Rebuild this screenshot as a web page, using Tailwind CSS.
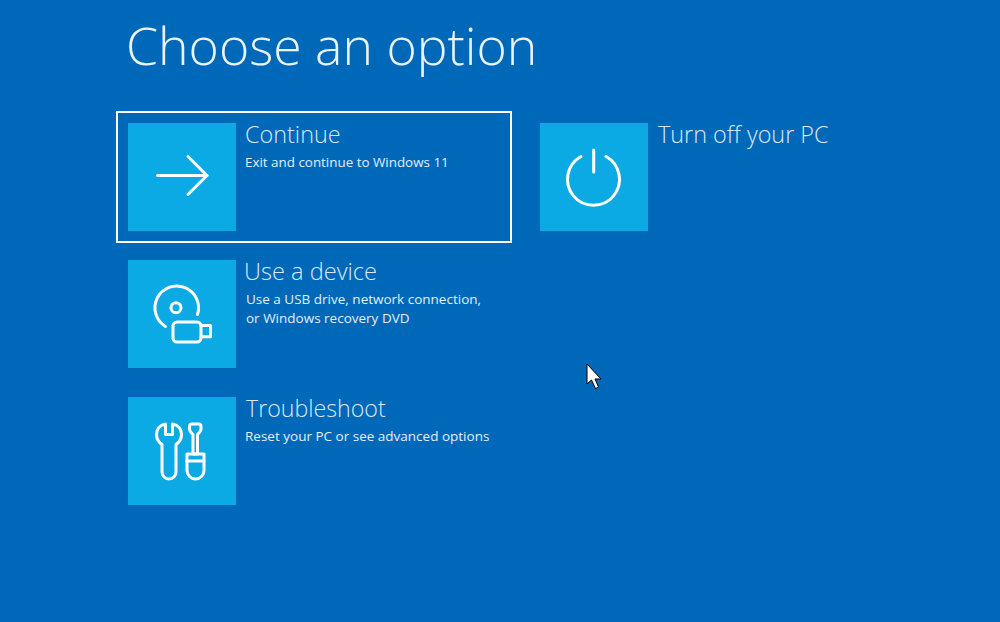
<!doctype html>
<html lang="en">
<head>
<meta charset="utf-8">
<title>Choose an option</title>
<script src="https://cdn.jsdelivr.net/npm/@tailwindcss/browser@4"></script>
</head>
<body class="relative w-[1000px] h-[622px] overflow-hidden bg-[#0068b8] text-white font-['Open_Sans','Noto_Sans',sans-serif]">
  <div class="pl-[116px]">
    <h1 class="pl-[10px] h-[111px] pt-[13px] text-[51.7px] leading-[64px] font-light text-[#eaf3fa]">Choose an option</h1>

    <div class="flex gap-4">
      <div class="flex flex-col gap-[5px] w-[396px]">
        <!-- selected item -->
        <div class="flex h-[132px] p-[10px] border-2 border-white">
          <div class="flex items-center justify-center w-[108px] h-[108px] bg-[#0caae5]">
            <svg class="w-[108px] h-[108px]" viewBox="0 0 108 108" fill="none" stroke="white" stroke-width="3" stroke-linecap="round" stroke-linejoin="round">
              <path d="M29.500 52.500H79"/>
              <path d="M60 33.500l19 19-19 19"/>
            </svg>
          </div>
          <div class="pl-[9px] -mt-px">
            <p class="text-[23.4px] leading-[24px] font-light text-[#dbe9f5]">Continue</p>
            <p class="mt-[7px] text-[13.4px] leading-[19px] text-[#e3eef8]">Exit and continue to Windows 11</p>
          </div>
        </div>

        <div class="flex h-[132px] p-[12px]">
          <div class="flex items-center justify-center w-[108px] h-[108px] bg-[#0caae5]">
            <svg class="w-[108px] h-[108px]" viewBox="0 0 108 108" fill="none" stroke="white" stroke-width="3" stroke-linecap="round" stroke-linejoin="round">
              <path d="M69.500 54.500A21.800 21.800 0 1 0 37.500 66.500"/>
              <circle cx="48" cy="47.700" r="5"/>
              <rect x="45" y="62" width="28" height="20" rx="4"/>
              <path d="M73 65.500H82.500V76.800H73"/>
            </svg>
          </div>
          <div class="pl-[9px] -mt-px">
            <p class="-ml-px text-[23.6px] leading-[24px] font-light text-[#dbe9f5]">Use a device</p>
            <p class="mt-[7px] pl-[1px] text-[13.5px] leading-[19px] text-[#e3eef8]">Use a USB drive, network connection,<br>or Windows recovery DVD</p>
          </div>
        </div>

        <div class="flex h-[132px] p-[12px]">
          <div class="flex items-center justify-center w-[108px] h-[108px] bg-[#0caae5]">
            <svg class="w-[108px] h-[108px]" viewBox="0 0 108 108" fill="none" stroke="white" stroke-width="3" stroke-linecap="round" stroke-linejoin="round">
              <path d="M37.500 27C32 28 28.500 32 28.500 37.500C28.500 42 31 45.500 34 47.500V75A7 7 0 0 0 48 75V47.500C51 45.500 53.500 42 53.500 37.500C53.500 32 50 28 44.500 27V37.500H37.500Z"/>
              <path d="M64 27H70.500C72 27 73 28 73 29.500V32C73 34 71 36 69.500 37.500V57H65V37.500C63.500 36 61.500 34 61.500 32V29.500C61.500 28 62.500 27 64 27Z"/>
              <path d="M59 57H76V73.500A8.500 8.500 0 0 1 59 73.500Z"/>
              <path d="M59 64H76"/>
            </svg>
          </div>
          <div class="pl-[10px] -mt-px">
            <p class="text-[23.2px] leading-[24px] font-light text-[#dbe9f5]">Troubleshoot</p>
            <p class="mt-[7px] -ml-[1px] text-[13.5px] leading-[19px] text-[#e3eef8]">Reset your PC or see advanced options</p>
          </div>
        </div>
      </div>

      <div class="w-[396px]">
        <div class="flex h-[132px] p-[12px]">
          <div class="flex items-center justify-center w-[108px] h-[108px] bg-[#0caae5]">
            <svg class="w-[108px] h-[108px]" viewBox="0 0 108 108" fill="none" stroke="white" stroke-width="3" stroke-linecap="round" stroke-linejoin="round">
              <path d="M53.700 27V49"/>
              <path d="M41 33.500A26 26 0 1 0 66 33.500"/>
            </svg>
          </div>
          <div class="pl-[10px] -mt-px">
            <p class="text-[23.4px] leading-[24px] font-light text-[#dbe9f5]">Turn off your PC</p>
          </div>
        </div>
      </div>
    </div>
  </div>

  <!-- mouse pointer -->
  <svg class="absolute left-[586px] top-[363px] w-[16px] h-[27px]" viewBox="0 0 16 27">
    <path d="M1 1V21L5.500 17L9.500 25.500L12.500 24L9 16H15Z" fill="white" stroke="black" stroke-width="1" stroke-linejoin="round"/>
  </svg>
</body>
</html>
